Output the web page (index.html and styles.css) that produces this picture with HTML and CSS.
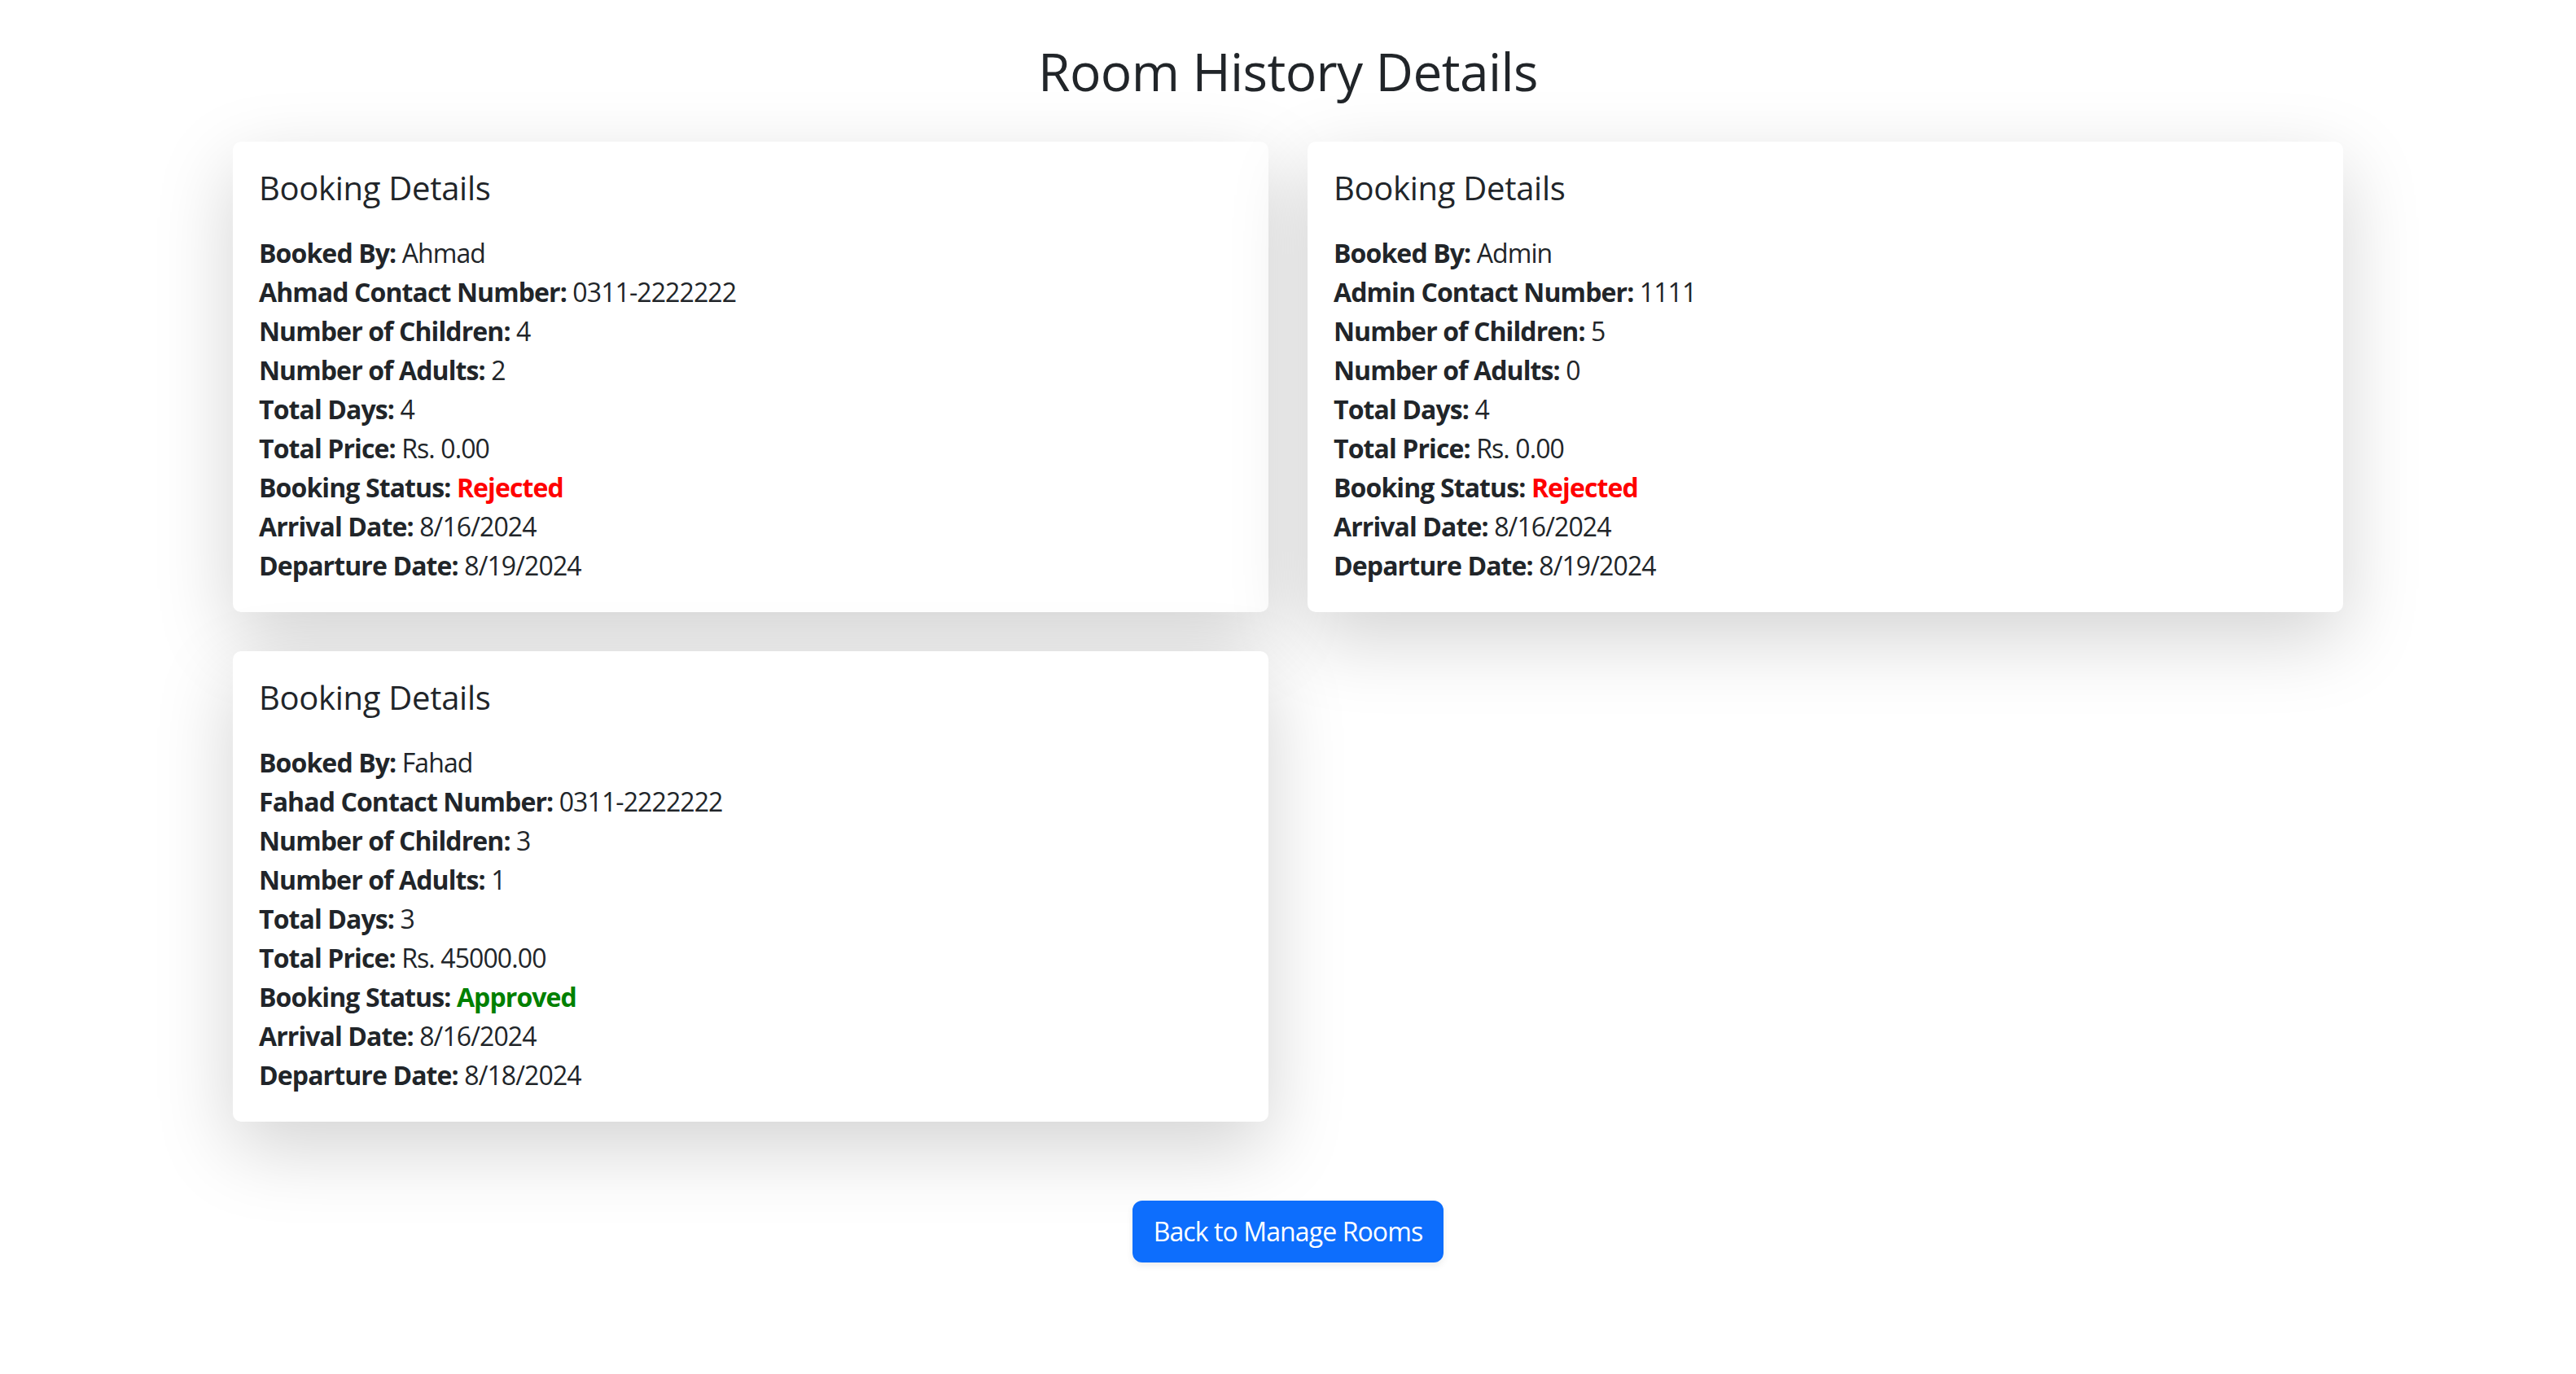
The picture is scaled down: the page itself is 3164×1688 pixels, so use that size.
FILE: index.html
```html
<!DOCTYPE html>
<html lang="en">
<head>
<meta charset="utf-8">
<title>Room History Details</title>
<link rel="stylesheet" href="styles.css">
</head>
<body>
<main class="page">
  <h1 class="page-title">Room History Details</h1>
  <div class="booking-grid">
    <article class="booking-card">
      <h2 class="card-title">Booking Details</h2>
      <p class="detail"><strong>Booked By:</strong> Ahmad</p>
      <p class="detail"><strong>Ahmad Contact Number:</strong> 0311-2222222</p>
      <p class="detail"><strong>Number of Children:</strong> 4</p>
      <p class="detail"><strong>Number of Adults:</strong> 2</p>
      <p class="detail"><strong>Total Days:</strong> 4</p>
      <p class="detail"><strong>Total Price:</strong> Rs. 0.00</p>
      <p class="detail"><strong>Booking Status:</strong> <span class="status status-rejected">Rejected</span></p>
      <p class="detail"><strong>Arrival Date:</strong> 8/16/2024</p>
      <p class="detail"><strong>Departure Date:</strong> 8/19/2024</p>
    </article>
    <article class="booking-card">
      <h2 class="card-title">Booking Details</h2>
      <p class="detail"><strong>Booked By:</strong> Admin</p>
      <p class="detail"><strong>Admin Contact Number:</strong> 1111</p>
      <p class="detail"><strong>Number of Children:</strong> 5</p>
      <p class="detail"><strong>Number of Adults:</strong> 0</p>
      <p class="detail"><strong>Total Days:</strong> 4</p>
      <p class="detail"><strong>Total Price:</strong> Rs. 0.00</p>
      <p class="detail"><strong>Booking Status:</strong> <span class="status status-rejected">Rejected</span></p>
      <p class="detail"><strong>Arrival Date:</strong> 8/16/2024</p>
      <p class="detail"><strong>Departure Date:</strong> 8/19/2024</p>
    </article>
    <article class="booking-card">
      <h2 class="card-title">Booking Details</h2>
      <p class="detail"><strong>Booked By:</strong> Fahad</p>
      <p class="detail"><strong>Fahad Contact Number:</strong> 0311-2222222</p>
      <p class="detail"><strong>Number of Children:</strong> 3</p>
      <p class="detail"><strong>Number of Adults:</strong> 1</p>
      <p class="detail"><strong>Total Days:</strong> 3</p>
      <p class="detail"><strong>Total Price:</strong> Rs. 45000.00</p>
      <p class="detail"><strong>Booking Status:</strong> <span class="status status-approved">Approved</span></p>
      <p class="detail"><strong>Arrival Date:</strong> 8/16/2024</p>
      <p class="detail"><strong>Departure Date:</strong> 8/18/2024</p>
    </article>
  </div>
  <div class="actions">
    <a class="btn-primary" href="#">Back to Manage Rooms</a>
  </div>
</main>
</body>
</html>
```
FILE: styles.css
```css
html, body {
  margin: 0;
  padding: 0;
  background: #ffffff;
}

body {
  font-family: "Open Sans", "Noto Sans", "Liberation Sans", sans-serif;
  font-size: 32px;
  line-height: 48px;
  color: #212529;
  letter-spacing: -0.9px;
}

.page {
  width: 2592px;
  margin: 0 auto;
  padding-bottom: 96px;
}

.page-title {
  margin: 50px 0 47px;
  font-size: 64px;
  line-height: 76.8px;
  font-weight: 500;
  letter-spacing: -0.6px;
  text-align: center;
}

.booking-grid {
  display: grid;
  grid-template-columns: 1fr 1fr;
  gap: 48px;
}

.booking-card {
  background: #ffffff;
  border-radius: 10px;
  box-shadow: 0 32px 96px rgba(0, 0, 0, 0.175);
  padding: 33px 32px;
}

.card-title {
  margin: 0 0 32px;
  font-size: 40px;
  line-height: 48px;
  font-weight: 500;
  letter-spacing: -0.3px;
}

.detail {
  margin: 0;
}

.detail strong {
  font-weight: 700;
}

.status {
  font-weight: 700;
}

.status-rejected {
  color: #ff0000;
}

.status-approved {
  color: #008000;
}

.actions {
  margin-top: 97px;
  text-align: center;
}

.btn-primary {
  display: inline-block;
  background: #0d6efd;
  color: #ffffff;
  border: 2px solid #0d6efd;
  border-radius: 12px;
  padding: 12px 24px;
  font-size: 32px;
  line-height: 48px;
  text-decoration: none;
  box-shadow: 0 4px 8px rgba(0, 0, 0, 0.075);
}
```
